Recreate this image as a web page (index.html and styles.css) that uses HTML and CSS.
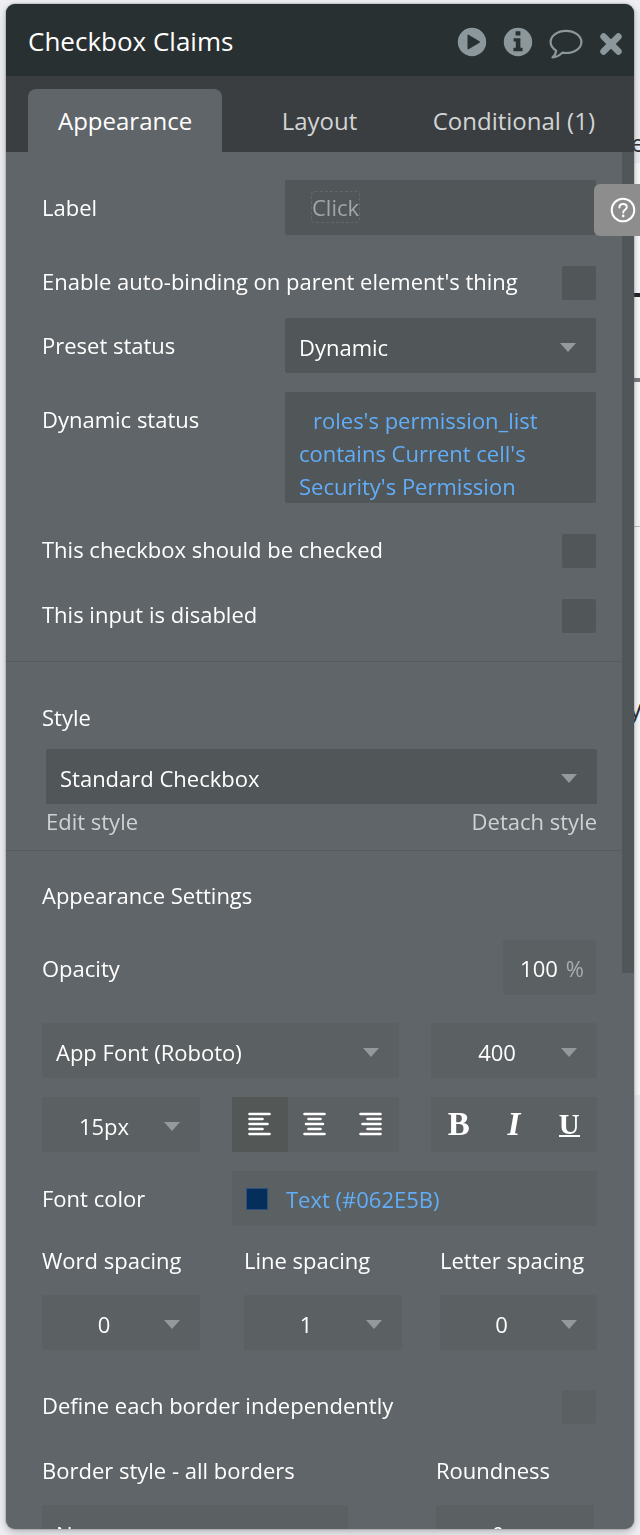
FILE: index.html
```
<!DOCTYPE html>
<html lang="en">
<head>
<meta charset="utf-8">
<meta name="viewport" content="width=device-width, initial-scale=1">
<title>Checkbox Claims</title>
<link rel="stylesheet" href="styles.css">
</head>
<body>
<main class="canvas">
  <div class="canvas-head">e</div>
  <div class="canvas-row strong"></div>
  <div class="canvas-row medium"></div>
  <div class="canvas-row thin"></div>
  <div class="canvas-text">y</div>
</main>

<aside class="panel">
  <header class="panel-head">
    <h1 class="title">Checkbox Claims</h1>
    <button class="icon-btn" type="button" aria-label="Preview">
      <svg width="30" height="30" viewBox="0 0 30 30"><circle cx="15" cy="15" r="14.2" fill="currentColor"/><path d="M10.500 8.200v13.600c0 .6.5.8 1 .5l11-6.500c.6-.4.6-1.100 0-1.500l-11-6.600c-.5-.3-1-.1-1 .5z" fill="#293031"/></svg>
    </button>
    <button class="icon-btn" type="button" aria-label="Information">
      <svg width="30" height="30" viewBox="0 0 30 30"><circle cx="15" cy="15" r="14.2" fill="currentColor"/><path d="M12.600 4.200h4.800v4.200h-4.800zM10.600 11.200h6.800v9.600h2.200v3.400h-9.200v-3.400h2.400v-6.200h-2.200z" fill="#293031"/></svg>
    </button>
    <button class="icon-btn comment" type="button" aria-label="Comment">
      <svg width="34" height="30" viewBox="0 0 34 30" fill="none" stroke="currentColor" stroke-width="2.2" stroke-linejoin="round"><path d="M17 1.800c8.500 0 15.400 5 15.400 11.200S25.500 24 17 24c-1.300 0-2.500-.1-3.700-.3-2.500 2.400-5.700 4.400-9.900 4.800 1.900-1.600 3.500-4.300 3.800-6.900C3.800 19.500 1.600 16.400 1.600 13 1.600 6.800 8.500 1.800 17 1.800z"/></svg>
    </button>
    <button class="icon-btn close" type="button" aria-label="Close">
      <svg width="24" height="24" viewBox="0 0 24 24" stroke="currentColor" stroke-width="6.600" stroke-linecap="round"><path d="M4.600 4.600l14.800 14.800M19.400 4.600L4.600 19.400"/></svg>
    </button>
  </header>

  <nav class="tabs">
    <button class="tab active" type="button">Appearance</button>
    <button class="tab" type="button">Layout</button>
    <button class="tab" type="button">Conditional (1)</button>
  </nav>

  <div class="panel-view">
    <form class="panel-body">
      <section class="section general">
        <div class="row">
          <span class="caption" id="label-caption">Label</span>
          <button class="control composer" type="button" aria-labelledby="label-caption"><span class="chip">Click</span></button>
        </div>
        <div class="check-row">
          <label for="autobind">Enable auto-binding on parent element's thing</label>
          <input class="check" id="autobind" type="checkbox">
        </div>
        <div class="row">
          <label class="caption" for="preset">Preset status</label>
          <span class="select"><select class="control" id="preset"><option>Dynamic</option></select></span>
        </div>
        <div class="row">
          <span class="caption" id="dynamic-caption">Dynamic status</span>
          <button class="control expression" type="button" aria-labelledby="dynamic-caption">roles's permission_list contains Current cell's Security's Permission</button>
        </div>
        <div class="check-row">
          <label for="checked">This checkbox should be checked</label>
          <input class="check" id="checked" type="checkbox">
        </div>
        <div class="check-row">
          <label for="disabled">This input is disabled</label>
          <input class="check" id="disabled" type="checkbox">
        </div>
      </section>

      <section class="section style">
        <label class="line" for="style">Style</label>
        <div class="style-box">
          <span class="select"><select class="control" id="style"><option>Standard Checkbox</option></select></span>
          <div class="style-links">
            <a href="#edit">Edit style</a>
            <a href="#detach">Detach style</a>
          </div>
        </div>
      </section>

      <section class="section soft settings">
        <h2 class="line">Appearance Settings</h2>
        <div class="opacity-row">
          <label for="opacity">Opacity</label>
          <span class="control percent"><input id="opacity" type="text" value="100"><span class="unit">%</span></span>
        </div>
        <div class="font-grid">
          <span class="select wide"><select class="control" aria-label="Font family"><option>App Font (Roboto)</option></select></span>
          <span class="select"><select class="control centered" aria-label="Font weight"><option>400</option></select></span>

          <span class="select"><select class="control centered" aria-label="Font size"><option>15px</option></select></span>
          <div class="group">
            <button class="tool on" type="button" aria-label="Align left"><svg width="24" height="26" viewBox="0 0 24 26"><path d="M1.500 2h20M1.500 7h13M1.500 12h18M1.500 17h13M1.500 22h20"/></svg></button>
            <button class="tool" type="button" aria-label="Align center"><svg width="24" height="26" viewBox="0 0 24 26"><path d="M1.500 2h20M5.500 7h12M3 12h17M5.500 17h12M1.500 22h20"/></svg></button>
            <button class="tool" type="button" aria-label="Align right"><svg width="24" height="26" viewBox="0 0 24 26"><path d="M1.500 2h20M8.500 7h13M3.500 12h18M8.500 17h13M1.500 22h20"/></svg></button>
          </div>
          <div class="group letters">
            <button class="tool" type="button" aria-label="Bold">B</button>
            <button class="tool italic" type="button" aria-label="Italic">I</button>
            <button class="tool" type="button" aria-label="Underline"><span class="under">U</span></button>
          </div>

          <span class="caption" id="color-caption">Font color</span>
          <button class="control color wide" type="button" aria-labelledby="color-caption"><span class="swatch"></span>Text (#062E5B)</button>
        </div>

        <div class="spacing-grid">
          <div class="field">
            <label class="line" for="word">Word spacing</label>
            <span class="select"><select class="control centered" id="word"><option>0</option></select></span>
          </div>
          <div class="field">
            <label class="line" for="linesp">Line spacing</label>
            <span class="select"><select class="control centered" id="linesp"><option>1</option></select></span>
          </div>
          <div class="field">
            <label class="line" for="letter">Letter spacing</label>
            <span class="select"><select class="control centered" id="letter"><option>0</option></select></span>
          </div>
        </div>

        <div class="check-row borders">
          <label for="borders">Define each border independently</label>
          <input class="check" id="borders" type="checkbox">
        </div>

        <div class="border-grid">
          <div class="field">
            <label class="line" for="bstyle">Border style - all borders</label>
            <span class="select"><select class="control" id="bstyle"><option>None</option></select></span>
          </div>
          <div class="field">
            <label class="line" for="round">Roundness</label>
            <span class="select"><select class="control centered" id="round"><option>0</option></select></span>
          </div>
        </div>
      </section>
    </form>
    <div class="thumb"></div>
  </div>
</aside>

<button class="help" type="button" aria-label="Help">
  <svg width="26" height="26" viewBox="0 0 26 26" fill="none" stroke="#fff" stroke-width="2" stroke-linecap="round" stroke-linejoin="round"><circle cx="13" cy="13" r="11.300"/><path d="M9.400 10.600c0-2.200 1.500-3.500 3.700-3.500s3.700 1.400 3.700 3.200c0 2.300-3.600 2.600-3.600 5.100"/><path d="M13.200 18.900v.2" stroke-width="2.600"/></svg>
</button>
</body>
</html>
```
FILE: styles.css
```
* { box-sizing: border-box; }

body {
  margin: 0;
  height: 100vh;
  overflow: hidden;
  background: #efeff3;
  color: #fff;
  font: 22px/30px "Open Sans", "Noto Sans", sans-serif;
}

button, input, select {
  margin: 0;
  border: 0;
  padding: 0;
  background: none;
  color: inherit;
  font: inherit;
}

h1, h2 { margin: 0; font-weight: 400; }

/* Page lying behind the floating panel */
.canvas { margin-left: 12px; color: #2b2d33; overflow: hidden; }
.canvas-head { height: 163px; padding: 128px 0 0 619px; font-size: 24px; }
.canvas-row { background: #fafafa; }
.strong { height: 134px; border-bottom: 4px solid #25262a; }
.medium { height: 85px; border-bottom: 4px solid #7c7c7e; }
.thin { height: 145px; border-bottom: 1px solid #c4c4c4; }
.canvas-text { height: 568px; padding: 166px 0 0 617px; background: #fafafa; font-size: 26px; }

.panel {
  position: fixed;
  inset: 4px 6px 6px 6px;
  display: flex;
  flex-direction: column;
  overflow: hidden;
  border-radius: 9px;
  background: #606569;
  box-shadow: 0 0 2px #6c7275, 0 3px 8px rgba(0, 0, 0, .25);
}

.panel-head {
  display: flex;
  align-items: center;
  flex: none;
  height: 72px;
  padding: 4px 11px 0 22px;
  background: #293031;
  gap: 16px;
}
.title { flex: 1; padding-bottom: 2px; font-size: 26px; line-height: 32px; }
.icon-btn { display: grid; place-items: center; color: #8b979b; }
.icon-btn svg { display: block; }
.comment, .close { padding-top: 4px; }

.tabs {
  display: flex;
  justify-content: space-between;
  flex: none;
  height: 76px;
  padding: 13px 9px 0 22px;
  background: #3a3e40;
}
.tab { padding: 0 30px; border-radius: 8px 8px 0 0; color: #d2d4d5; font-size: 24px; }
.tab:last-child { padding-left: 16px; }
.tabs .active { background: #606569; color: #fff; }

.panel-view { position: relative; flex: 1; min-height: 0; }
.panel-body { height: 100%; overflow-y: auto; scrollbar-width: none; }
.thumb { position: absolute; top: 0; right: 0; width: 12px; height: 59.6%; background: #515658; }

.section { padding: 28px 37px 28px 36px; --control: #515658; }
.section + .section { border-top: 1px solid #565b5e; }
.soft { --control: #5b6062; }
.line { display: block; font-size: 22px; line-height: 30px; }

.control {
  display: block;
  width: 100%;
  height: 55px;
  padding: 0 14px;
  border-radius: 2px;
  background: var(--control);
  text-align: left;
}

.select { display: grid; align-items: center; }
.select > select { grid-area: 1 / 1; appearance: none; padding: 3px 50px 0 14px; }
.select > .centered { padding: 3px 42px 0 8px; text-align-last: center; }
.select::after {
  content: "";
  grid-area: 1 / 1;
  justify-self: end;
  width: 16px;
  height: 9px;
  margin: 4px 20px 0 0;
  background: #94999c;
  clip-path: polygon(0 0, 100% 0, 50% 100%);
  pointer-events: none;
}

.check {
  flex: none;
  appearance: none;
  width: 34px;
  height: 34px;
  border-radius: 2px;
  background: var(--control);
}
.check-row { display: flex; justify-content: space-between; padding-top: 13px; }

.general { display: flex; flex-direction: column; gap: 18px; padding-right: 38px; }
.row { display: grid; grid-template-columns: 243fr 311fr; }
.row + .row { padding-top: 1px; }
.caption { line-height: 55px; }
.composer { padding: 0 14px 2px 26px; color: #a3a6a7; }
.chip { display: inline-block; border: 1px dashed #63686a; border-radius: 4px; }
.general .expression {
  height: auto;
  padding: 12px 14px 0;
  color: #62adf8;
  line-height: 33px;
  text-indent: 14px;
}

.style { padding-top: 40px; padding-bottom: 12px; }
.style-box { padding: 17px 0 0 4px; }
.style-links { display: flex; justify-content: space-between; line-height: 34px; }
.style-links a { color: #cfd2d3; text-decoration: none; }

.settings { padding-top: 29px; }
.opacity-row {
  display: flex;
  align-items: center;
  justify-content: space-between;
  margin: 30px 0 28px;
  padding-right: 1px;
}
.percent { display: flex; align-items: center; gap: 8px; width: 93px; padding: 0 12px; }
.percent input { width: 100%; min-width: 0; text-align: right; }
.unit { color: #a9adaf; }

.font-grid { display: grid; grid-template-columns: 158fr 167fr 166fr; gap: 19px 32px; }
.wide { grid-column: span 2; }
.group { display: grid; grid-template-columns: repeat(3, 1fr); height: 55px; background: var(--control); }
.tool { display: grid; place-items: center; }
.tool svg { fill: none; stroke: #fff; stroke-width: 2.6; stroke-linecap: round; }
.on { background: #535857; }
.letters { font: bold 33px/33px "Liberation Serif", serif; }
.italic { font-style: italic; }
.under { border-bottom: 2px solid #fff; font-size: 29px; line-height: 22px; }
.color { display: flex; align-items: center; gap: 18px; color: #62adf8; }
.swatch { width: 22px; height: 22px; border: 1px solid #2c4f80; background: #062e5b; }

.field { display: grid; gap: 20px; }
.spacing-grid { display: grid; grid-template-columns: 202fr 196fr 157fr; margin-top: 19px; }
.spacing-grid .field { max-width: 158px; }
.borders { margin-top: 27px; padding-right: 1px; }
.border-grid { display: grid; grid-template-columns: 306fr 158fr; gap: 88px; margin-top: 31px; padding-right: 3px; }

.help {
  position: fixed;
  top: 184px;
  right: 0;
  display: grid;
  place-items: center;
  width: 46px;
  height: 52px;
  padding-left: 12px;
  border-radius: 6px 0 0 6px;
  background: #8d8d8d;
}
```
